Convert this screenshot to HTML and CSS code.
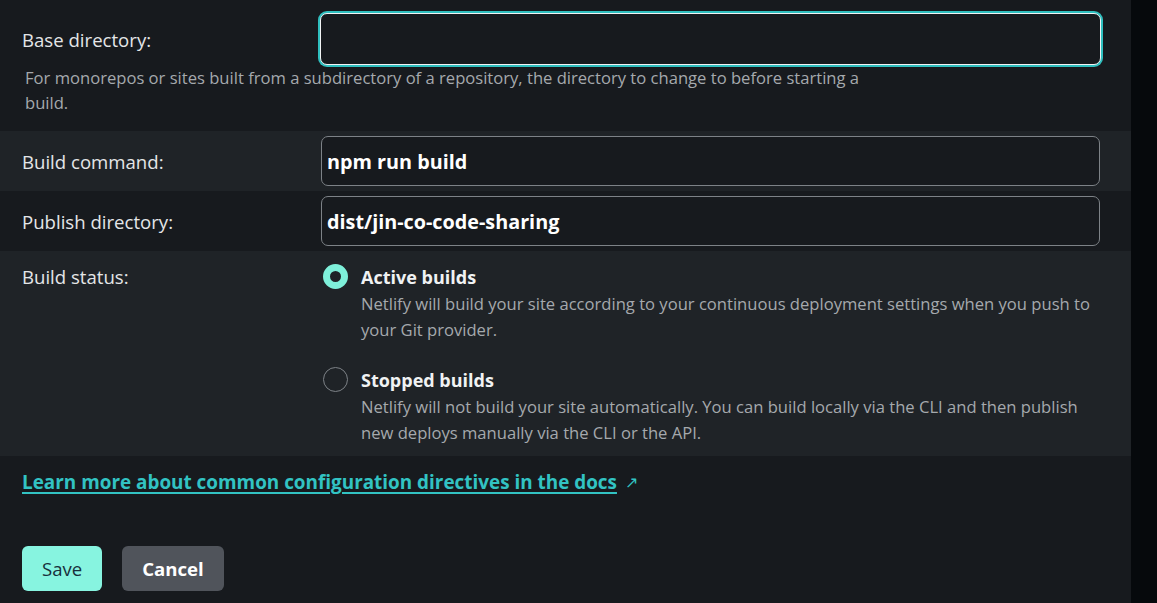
FILE: index.html
```html
<!DOCTYPE html>
<html>
<head>
<meta charset="utf-8">
<link rel="stylesheet" href="styles.css">
</head>
<body>
<div class="page">
  <main class="main">
    <div class="row row-base">
      <div class="field">
        <label class="label">Base directory:</label>
        <div class="input input-focus"></div>
      </div>
      <p class="help">For monorepos or sites built from a subdirectory of a repository, the directory to change to before starting a build.</p>
    </div>
    <div class="row row-alt">
      <div class="field">
        <label class="label">Build command:</label>
        <div class="input">npm run build</div>
      </div>
    </div>
    <div class="row">
      <div class="field">
        <label class="label">Publish directory:</label>
        <div class="input">dist/jin-co-code-sharing</div>
      </div>
    </div>
    <div class="row row-alt row-status">
      <div class="field">
        <label class="label">Build status:</label>
        <div class="options">
          <div class="option">
            <span class="radio radio-on"></span>
            <div class="option-body">
              <div class="option-title">Active builds</div>
              <div class="option-desc">Netlify will build your site according to your continuous deployment settings when you push to your Git provider.</div>
            </div>
          </div>
          <div class="option">
            <span class="radio"></span>
            <div class="option-body">
              <div class="option-title">Stopped builds</div>
              <div class="option-desc">Netlify will not build your site automatically. You can build locally via the CLI and then publish new deploys manually via the CLI or the API.</div>
            </div>
          </div>
        </div>
      </div>
    </div>
    <div class="links">
      <a class="doc-link" href="#">Learn more about common configuration directives in the docs</a>
      <span class="arrow">&#8599;</span>
    </div>
    <div class="actions">
      <button class="btn btn-save">Save</button>
      <button class="btn btn-cancel">Cancel</button>
    </div>
  </main>
  <aside class="strip"></aside>
</div>
</body>
</html>
```
FILE: styles.css
```css
html, body {
  margin: 0;
  padding: 0;
  background: #181b20;
  height: 100%;
  overflow: hidden;
}
body {
  font-family: "Open Sans", "Noto Sans", sans-serif;
  color: #e4e6e8;
}
.page {
  display: flex;
  height: 603px;
}
.main {
  width: 1131px;
  flex: none;
  background: #171a1e;
}
.strip {
  flex: 1;
  background: #06090c;
}
.row {
  padding: 0 31px 0 22px;
}
.row-alt {
  background: #1f2327;
}
.field {
  display: grid;
  grid-template-columns: 299px 1fr;
  align-items: center;
  min-height: 60px;
}
.label {
  font-size: 18.6px;
  color: #e4e6e8;
}
.input {
  box-sizing: border-box;
  height: 50px;
  border: 1px solid #7d8287;
  border-radius: 7px;
  background: #171a1e;
  padding: 0 5px;
  display: flex;
  align-items: center;
  font-size: 19.8px;
  font-weight: 700;
  color: #ffffff;
}
.input-focus {
  height: 52px;
  margin-left: -1px;
  margin-right: -1px;
  border: 1px solid #f2f4f5;
  box-shadow: 0 0 0 2px #2fbfbf;
}
.row-base {
  padding-top: 13px;
  padding-bottom: 16px;
}
.row-base .field {
  min-height: 52px;
}
.help {
  margin: 0;
  padding-left: 3px;
  width: 850px;
  font-size: 16.6px;
  line-height: 25px;
  color: #a5a9ad;
}
.row-status .field {
  align-items: start;
  padding: 12px 0 10px;
}
.row-status .label {
  line-height: 28px;
}
.options {
  display: flex;
  flex-direction: column;
  gap: 23px;
}
.option {
  display: flex;
  gap: 13px;
  padding-left: 2px;
}
.radio {
  flex: none;
  box-sizing: border-box;
  width: 25px;
  height: 25px;
  margin-top: 1px;
  border-radius: 50%;
  border: 1px solid #7d8287;
}
.radio-on {
  border: 7px solid #7ef0da;
  background: #1f2327;
}
.option-title {
  font-size: 18px;
  font-weight: 700;
  line-height: 28px;
  color: #f0f2f3;
}
.option-desc {
  font-size: 16.6px;
  line-height: 26px;
  color: #a5a9ad;
}
.links {
  padding: 13px 22px 0;
  display: flex;
  align-items: center;
  gap: 8px;
  line-height: 26px;
}
.doc-link {
  font-size: 18.9px;
  font-weight: 700;
  color: #32c3c3;
  text-decoration: underline;
  text-underline-offset: 3px;
  text-decoration-thickness: 2px;
}
.arrow {
  color: #32c3c3;
  font-size: 16px;
}
.actions {
  padding: 51px 22px 0;
  display: flex;
  gap: 20px;
}
.btn {
  height: 45px;
  border: none;
  border-radius: 6px;
  font-family: inherit;
  font-size: 18.6px;
  padding: 0 20px;
  cursor: pointer;
}
.btn-save {
  background: #87f4e0;
  color: #17303c;
  font-weight: 500;
}
.btn-cancel {
  background: #50545b;
  color: #ffffff;
  font-weight: 700;
}
```
